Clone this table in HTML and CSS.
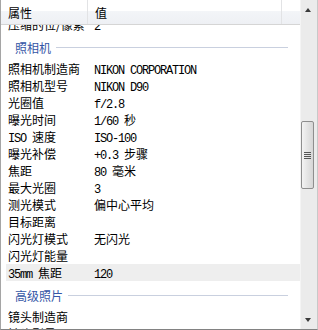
FILE: index.html
```html
<!DOCTYPE html>
<html lang="zh-CN">
<head>
    <meta charset="UTF-8">
    <title>属性</title>
    <link rel="stylesheet" href="styles.css">
</head>
<body>
    <div class="frame">
        <div class="list">
            <!-- column headers -->
            <div class="head">
                <div class="hc c1">属性</div>
                <div class="hc c2">值</div>
                <div class="hc c3"></div>
            </div>

            <div class="view">
                <div class="rows">
                    <div class="row"><span class="k">压缩的位/像素</span><span class="v"><span class="en">2</span></span></div>

                    <div class="group"><span>照相机</span><i></i></div>
                    <div class="row"><span class="k">照相机制造商</span><span class="v"><span class="en">NIKON CORPORATION</span></span></div>
                    <div class="row"><span class="k">照相机型号</span><span class="v"><span class="en">NIKON D90</span></span></div>
                    <div class="row"><span class="k">光圈值</span><span class="v"><span class="en">f/2.8</span></span></div>
                    <div class="row"><span class="k">曝光时间</span><span class="v"><span class="en">1/60 </span>秒</span></div>
                    <div class="row"><span class="k"><span class="en">ISO </span>速度</span><span class="v"><span class="en">ISO-100</span></span></div>
                    <div class="row"><span class="k">曝光补偿</span><span class="v"><span class="en">+0.3 </span>步骤</span></div>
                    <div class="row"><span class="k">焦距</span><span class="v"><span class="en">80 </span>毫米</span></div>
                    <div class="row"><span class="k">最大光圈</span><span class="v"><span class="en">3</span></span></div>
                    <div class="row"><span class="k">测光模式</span><span class="v">偏中心平均</span></div>
                    <div class="row"><span class="k">目标距离</span><span class="v"></span></div>
                    <div class="row"><span class="k">闪光灯模式</span><span class="v">无闪光</span></div>
                    <div class="row"><span class="k">闪光灯能量</span><span class="v"></span></div>
                    <div class="row hover"><span class="k"><span class="en">35mm </span>焦距</span><span class="v"><span class="en">120</span></span></div>

                    <div class="group"><span>高级照片</span><i></i></div>
                    <div class="row"><span class="k">镜头制造商</span><span class="v"></span></div>
                    <div class="row"><span class="k">镜头型号</span><span class="v"></span></div>
                </div>
            </div>
        </div>

        <!-- vertical scrollbar -->
        <div class="scroll">
            <div class="arrow up"></div>
            <div class="track">
                <div class="thumb"><b></b><b></b><b></b><b></b></div>
            </div>
            <div class="arrow down"></div>
        </div>
    </div>
</body>
</html>
```

FILE: styles.css
```css
html, body {
    margin: 0;
    padding: 0;
}
body {
    width: 318px;
    height: 330px;
    overflow: hidden;
    background: #fff;
    color: #000;
    font-family: "Noto Sans CJK SC", sans-serif;
    font-size: 12px;
}
.frame {
    display: flex;
    height: 329px;
    border-left: 1px solid #a5a5a5;
    border-right: 1px solid #c8c8c8;
    border-bottom: 1px solid #828282;
}
.list {
    flex: 1;
    display: flex;
    flex-direction: column;
    min-width: 0;
}
.head {
    display: flex;
    height: 24px;
    border-bottom: 1px solid #d5d5d5;
    background: linear-gradient(#ffffff 0, #ffffff 45%, #f3f5f8 46%, #eef0f4 100%);
}
.hc {
    height: 24px;
    line-height: 22px;
    padding: 2px 0 0 7px;
    box-sizing: border-box;
    border-right: 1px solid #e2e3e5;
    font-size: 12px;
}
.c1 { width: 87px; }
.c2 { width: 194px; }
.c3 { flex: 1; border-right: none; }

.view {
    flex: 1;
    overflow: hidden;
}
.rows {
    margin-top: -9px;
}
.row {
    display: grid;
    grid-template-columns: 81px 195px;
    height: 17px;
    line-height: 17px;
    margin-left: 5px;
    white-space: nowrap;
}
.row.hover {
    background: #eeeeee;
}
.k {
    padding-left: 2px;
}
.v {
    padding-left: 7px;
}
.en {
    font-family: "Liberation Mono", monospace;
    font-size: 12px;
    letter-spacing: -1.2px;
}
.group {
    display: flex;
    align-items: center;
    height: 27px;
    padding: 6px 12px 4px 14px;
    box-sizing: border-box;
    color: #3556a6;
}
.group span {
    line-height: 17px;
}
.group i {
    flex: 1;
    height: 1px;
    margin-left: 5px;
    background: #c9d0df;
}

/* scrollbar */
.scroll {
    width: 17px;
    display: flex;
    flex-direction: column;
    background: #ebebeb;
    border-left: 1px solid #f4f4f4;
    box-sizing: border-box;
}
.arrow {
    height: 17px;
    position: relative;
}
.arrow::after {
    content: "";
    position: absolute;
    left: 4px;
    width: 0;
    height: 0;
    border-left: 3.5px solid transparent;
    border-right: 3.5px solid transparent;
}
.up::after {
    top: 8px;
    border-bottom: 4px solid #3a3a3a;
}
.down::after {
    top: 6px;
    border-top: 4px solid #3a3a3a;
}
.track {
    flex: 1;
    padding-top: 104px;
}
.thumb {
    width: 13px;
    height: 68px;
    border: 1px solid #8e8e8e;
    border-radius: 2px;
    box-sizing: border-box;
    background: linear-gradient(to right, #f3f3f3, #e4e4e4 50%, #d6d6d6);
    display: flex;
    flex-direction: column;
    justify-content: center;
    align-items: center;
    gap: 1px;
}
.thumb b {
    width: 7px;
    height: 1px;
    background: #555;
}
```
